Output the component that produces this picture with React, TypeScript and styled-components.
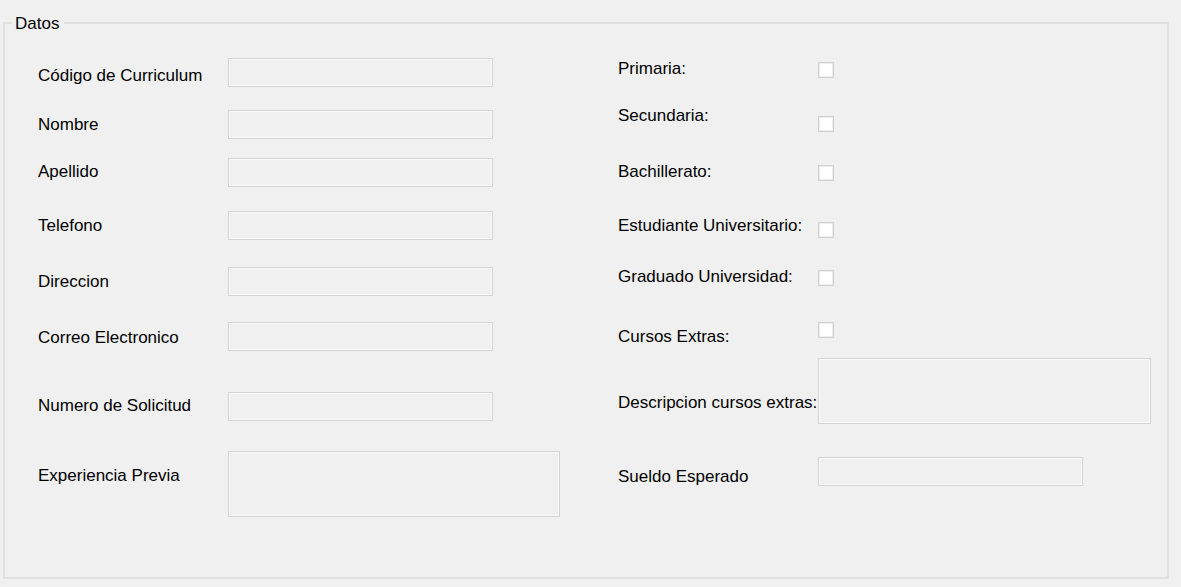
import React from "react";
import styled, { createGlobalStyle } from "styled-components";

const GlobalStyle = createGlobalStyle`
  * { box-sizing: border-box; }
  html, body { margin: 0; padding: 0; background: #f0f0f0; }
  body {
    width: 1181px;
    height: 587px;
    overflow: hidden;
    font-family: "Liberation Sans", Arial, sans-serif;
    color: #000;
  }
`;

const Window = styled.div`
  width: 1181px;
  height: 587px;
  padding: 12px 12px 8px 3px;
  background: #f0f0f0;
`;

const GroupBox = styled.fieldset`
  margin: 0;
  height: 100%;
  min-width: 0;
  padding: 0 7px;
  border: 2px solid #e0e0e0;
`;

const Caption = styled.legend`
  padding: 2px 5px 0 3px;
  font-size: 17px;
  line-height: 20px;
  color: #000;
`;

const Content = styled.div`
  display: grid;
  grid-template-columns: 580px 1fr;
  padding-left: 26px;
`;

const Column = styled.div<{ $labelW: number; $rows: number[]; $pt: number }>`
  display: grid;
  grid-template-columns: ${(p) => p.$labelW}px auto;
  grid-template-rows: ${(p) => p.$rows.map((r) => `${r}px`).join(" ")} auto;
  align-items: start;
  justify-items: start;
  padding-top: ${(p) => p.$pt}px;
`;

const Label = styled.label<{ $pad: number }>`
  padding-top: ${(p) => p.$pad}px;
  font-size: 17px;
  line-height: 20px;
  white-space: nowrap;
  color: #000;
`;

const TextBox = styled.input<{ $mt: number; $w: number }>`
  appearance: none;
  margin: ${(p) => p.$mt}px 0 0 0;
  width: ${(p) => p.$w}px;
  height: 29px;
  padding: 0 4px;
  background: #f0f0f0;
  border: 1px solid #d3d3d3;
  box-shadow: inset 0 0 0 1px #fafafa;
  font: inherit;
  outline: none;
`;

const Memo = styled.textarea<{ $mt: number; $w: number }>`
  appearance: none;
  resize: none;
  margin: ${(p) => p.$mt}px 0 0 0;
  width: ${(p) => p.$w}px;
  height: 66px;
  padding: 2px 4px;
  background: #f0f0f0;
  border: 1px solid #d3d3d3;
  box-shadow: inset 0 0 0 1px #fafafa;
  font: inherit;
  outline: none;
`;

const CheckBox = styled.input<{ $mt: number }>`
  appearance: none;
  margin: ${(p) => p.$mt}px 0 0 0;
  width: 16px;
  height: 16px;
  background: #ffffff;
  border: 1px solid #d0d0d0;
  box-shadow: inset 0 0 0 1px #ececec;
  outline: none;
`;

type Kind = "text" | "memo" | "check" | "sueldo";
type Field = { label: string; kind: Kind; shift: number };

const leftFields: Field[] = [
  { label: "Código de Curriculum", kind: "text", shift: 8 },
  { label: "Nombre", kind: "text", shift: 5 },
  { label: "Apellido", kind: "text", shift: 4 },
  { label: "Telefono", kind: "text", shift: 5 },
  { label: "Direccion", kind: "text", shift: 5 },
  { label: "Correo Electronico", kind: "text", shift: 6 },
  { label: "Numero de Solicitud", kind: "text", shift: 4 },
  { label: "Experiencia Previa", kind: "memo", shift: 15 },
];
const leftRows = [52, 48, 53, 56, 55, 70, 59];

const rightFields: Field[] = [
  { label: "Primaria:", kind: "check", shift: -3 },
  { label: "Secundaria:", kind: "check", shift: -10 },
  { label: "Bachillerato:", kind: "check", shift: -3 },
  { label: "Estudiante Universitario:", kind: "check", shift: -6 },
  { label: "Graduado Universidad:", kind: "check", shift: -3 },
  { label: "Cursos Extras:", kind: "check", shift: 5 },
  { label: "Descripcion cursos extras:", kind: "memo", shift: 35 },
  { label: "Sueldo Esperado", kind: "sueldo", shift: 10 },
];
const rightRows = [47, 56, 54, 51, 55, 36, 99];

function renderField(f: Field, key: string, memoW: number) {
  const pad = Math.max(f.shift, 0);
  const mt = Math.max(-f.shift, 0);
  let ctrl: React.ReactNode;
  if (f.kind === "text" || f.kind === "sueldo") ctrl = <TextBox $mt={mt} $w={265} readOnly />;
  else if (f.kind === "memo") ctrl = <Memo $mt={mt} $w={memoW} readOnly />;
  else ctrl = <CheckBox type="checkbox" $mt={mt} />;
  return (
    <React.Fragment key={key}>
      <Label $pad={pad}>{f.label}</Label>
      {ctrl}
    </React.Fragment>
  );
}

export default function App() {
  return (
    <>
      <GlobalStyle />
      <Window>
        <GroupBox>
          <Caption>Datos</Caption>
          <Content>
            <Column $labelW={190} $rows={leftRows} $pt={24}>
              {leftFields.map((f, i) => renderField(f, `l${i}`, 332))}
            </Column>
            <Column $labelW={200} $rows={rightRows} $pt={25}>
              {rightFields.map((f, i) => renderField(f, `r${i}`, 333))}
            </Column>
          </Content>
        </GroupBox>
      </Window>
    </>
  );
}
